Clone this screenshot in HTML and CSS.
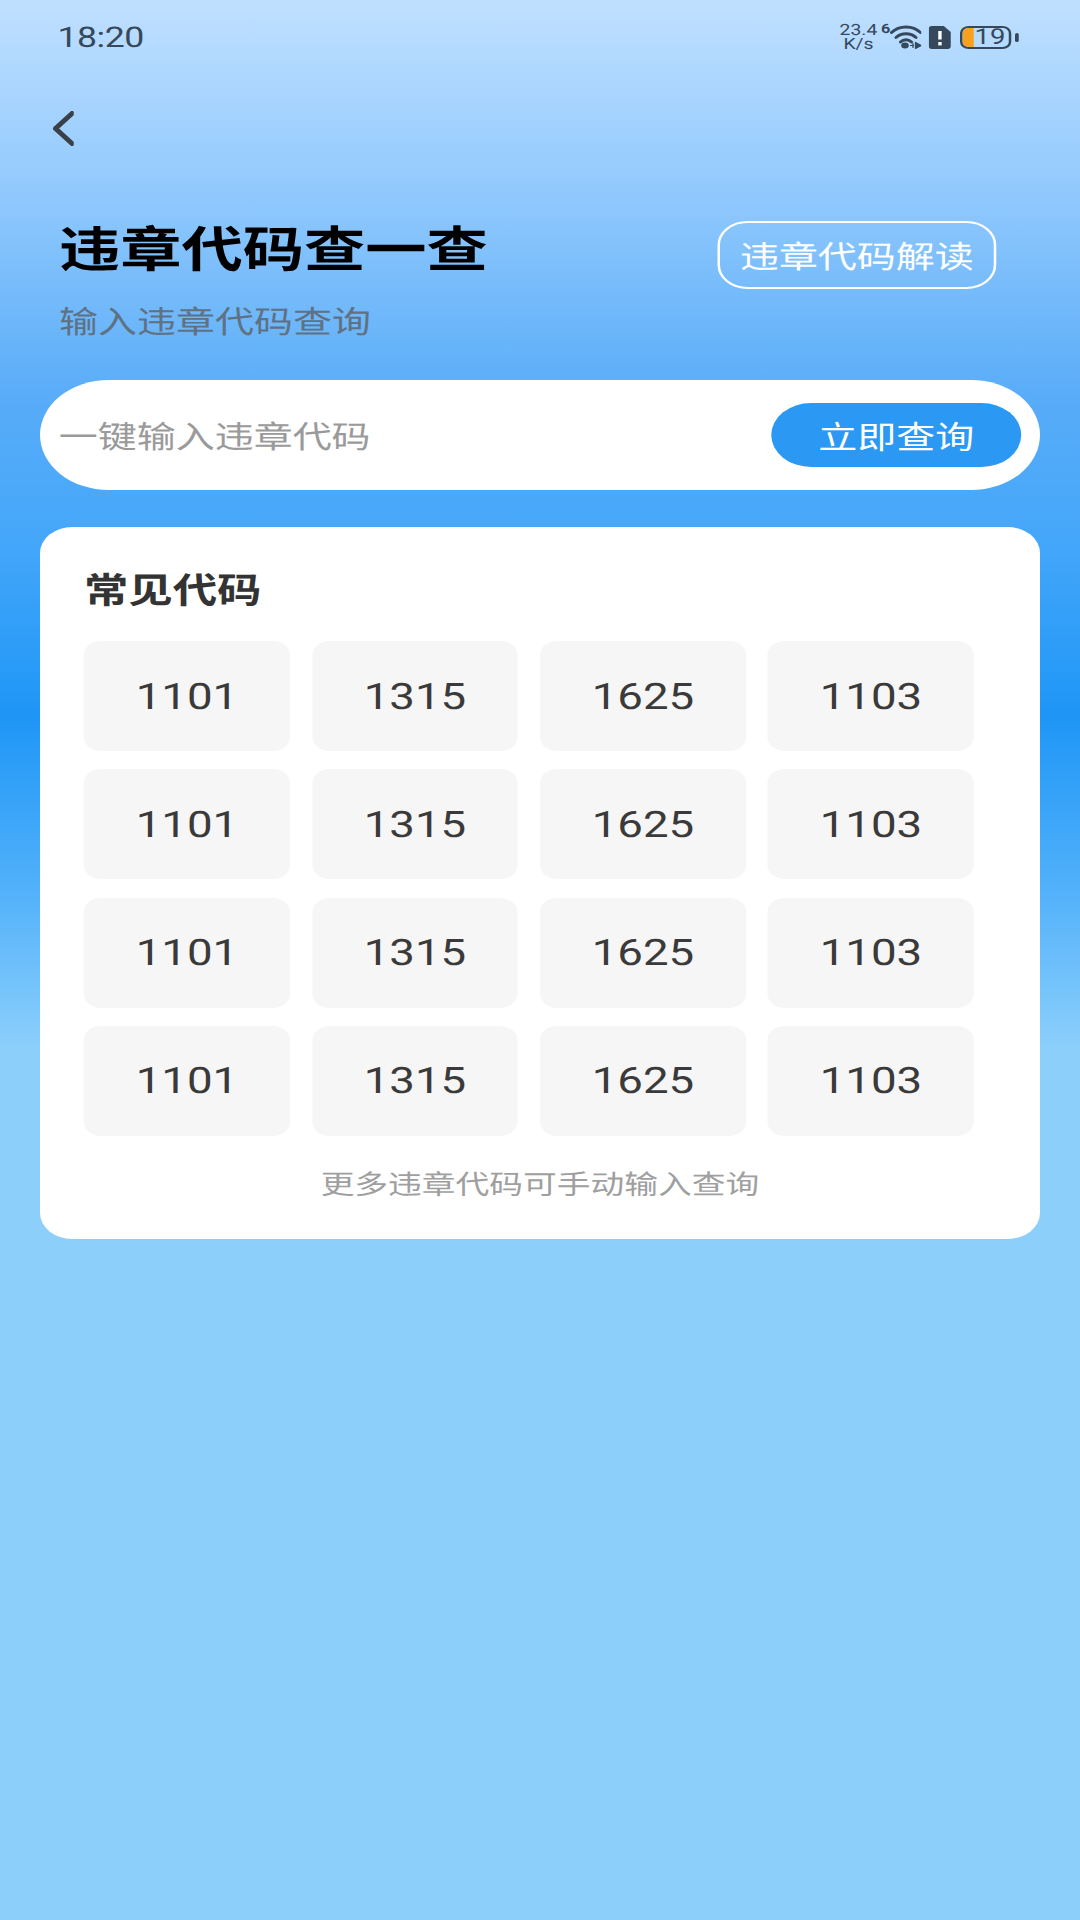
FILE: index.html
```html
<!DOCTYPE html>
<html lang="zh-CN">
<head>
<meta charset="utf-8">
<title>违章代码查一查</title>
<link rel="stylesheet" href="styles.css">
</head>
<body>
<div class="screen">
  <div class="status">
    <span class="time">18:20</span>
    <div class="status-right">
      <div class="speed"><span>23.4</span><span>K/s</span></div>
      <span class="wifi-six">6</span>
      <svg class="ic-wifi" viewBox="0 0 32 24" preserveAspectRatio="none">
        <path d="M1.5 7.5C9 0 23 0 30.5 7.5M6 12.5C11.5 7.5 20.5 7.5 26 12.5M10.5 17C13.5 14 18.5 14 21.5 17" fill="none" stroke="#36495c" stroke-width="3" stroke-linecap="round"/>
        <ellipse cx="15" cy="20.5" rx="3.8" ry="3" fill="#36495c"/>
        <path d="M20 20.5h4M25.5 17.5v6l5.5-3zM23 18v5" fill="#36495c" stroke="#36495c" stroke-width="1.2"/>
      </svg>
      <svg class="ic-sd" viewBox="0 0 22 23" preserveAspectRatio="none">
        <path d="M3 0H15L22 6V20Q22 23 19 23H3Q0 23 0 20V3Q0 0 3 0Z" fill="#36495c"/>
        <rect x="9.5" y="5" width="3.4" height="8.5" fill="#fff"/>
        <rect x="9.5" y="16" width="3.4" height="3.4" fill="#fff"/>
      </svg>
      <div class="battery"><span class="battery-fill"></span><span class="battery-num">19</span></div>
      <span class="battery-nub"></span>
    </div>
  </div>
  <div class="back">
    <svg class="ic-back" viewBox="0 0 22 35" preserveAspectRatio="none">
      <path d="M19.5 2.5 3 17.5 19.5 32.5" fill="none" stroke="#3a4047" stroke-width="5" stroke-linecap="round" stroke-linejoin="round"/>
    </svg>
  </div>
  <header class="head">
    <div class="head-text">
      <h1 class="title">违章代码查一查</h1>
      <p class="subtitle">输入违章代码查询</p>
    </div>
    <a class="explain">违章代码解读</a>
  </header>
  <div class="search">
    <span class="placeholder">一键输入违章代码</span>
    <button class="query">立即查询</button>
  </div>
  <section class="card">
    <h2 class="card-title">常见代码</h2>
    <div class="grid">
      <div class="tile">1101</div><div class="tile">1315</div><div class="tile">1625</div><div class="tile">1103</div>
      <div class="tile">1101</div><div class="tile">1315</div><div class="tile">1625</div><div class="tile">1103</div>
      <div class="tile">1101</div><div class="tile">1315</div><div class="tile">1625</div><div class="tile">1103</div>
      <div class="tile">1101</div><div class="tile">1315</div><div class="tile">1625</div><div class="tile">1103</div>
    </div>
    <p class="note">更多违章代码可手动输入查询</p>
  </section>
</div>
</body>
</html>
```
FILE: styles.css
```css
* { box-sizing: border-box; margin: 0; padding: 0; }
html, body { width: 1080px; height: 1920px; overflow: hidden; background: #8ccffb; }
body { font-family: "Noto Sans CJK SC", "Noto Sans", sans-serif; text-rendering: geometricPrecision; }

/* The reference is horizontally stretched by 1.25: lay out at 864 wide, then widen. */
.screen {
  width: 864px;
  height: 1920px;
  transform: scaleX(1.25);
  transform-origin: 0 0;
  background: linear-gradient(180deg, #c0e0ff 0, #8fc8fd 200px, #58acf8 400px, #45a7fa 540px, #1e96f6 715px, #52b1fa 890px, #8ccffb 1050px, #8ccffb 100%);
}

.status {
  height: 74px;
  padding: 0 40px 0 46px;
  display: flex;
  align-items: center;
  justify-content: space-between;
}
.time { font-family: Roboto, sans-serif; font-size: 28.5px; font-weight: 400; color: #36495c; letter-spacing: -.4px; }
.status-right { display: flex; align-items: center; padding-right: 9px; }
.speed { width: 30px; display: flex; flex-direction: column; align-items: center; font-family: Roboto, sans-serif; font-size: 15.5px; line-height: 14.5px; color: #36495c; }
.wifi-six { align-self: flex-start; margin-left: 3px; font-family: Roboto, sans-serif; font-size: 13px; line-height: 14px; font-weight: 700; color: #36495c; }
.ic-wifi { width: 25.6px; height: 24px; margin-left: -.5px; }
.ic-sd { width: 17.6px; height: 23px; margin-left: 5.6px; }
.battery { position: relative; width: 41.6px; height: 23px; margin-left: 7.2px; border: 2px solid #36495c; border-radius: 7px; display: flex; align-items: center; justify-content: center; overflow: hidden; }
.battery-fill { position: absolute; left: 0; top: 0; bottom: 0; width: 9.5px; background: #f9a11f; }
.battery-num { position: relative; font-family: Roboto, sans-serif; font-size: 22px; line-height: 19px; color: #36495c; padding-left: 7px; }
.battery-nub { width: 3.2px; height: 9px; margin-left: 2.5px; background: #36495c; border-radius: 2px; }

.back { height: 72px; padding-left: 41.6px; padding-top: 37px; }
.ic-back { display: block; width: 17.6px; height: 35px; }

.head { height: 234px; padding: 70.5px 67px 0 47.2px; display: flex; justify-content: space-between; align-items: flex-start; }
.title { font-size: 49px; line-height: 60px; font-weight: 700; color: #000; }
.subtitle { margin-top: 21px; font-size: 31.2px; line-height: 44px; color: #5f7284; }
.explain { width: 223px; height: 68px; margin-top: 4.5px; padding-bottom: 2px; border: 2px solid #fff; border-radius: 24px; display: flex; align-items: center; justify-content: center; font-size: 31.2px; color: #fff; }

.search { margin: 0 31.6px; height: 110px; background: #fff; border-radius: 55px; padding: 0 15.4px 2px 15.4px; display: flex; align-items: center; justify-content: space-between; }
.placeholder { font-size: 31.2px; color: #9a9a9a; }
.query { width: 200px; height: 64px; margin-top: 2px; padding-bottom: 2px; border: 0; border-radius: 32px; background: #2b98f3; color: #fff; font-family: inherit; font-size: 31.2px; }

.card { margin: 37px 31.6px 0; height: 712px; background: #fff; border-radius: 26px; padding: 38px 35.6px 0; }
.card-title { font-size: 35.5px; line-height: 48px; font-weight: 700; color: #333; }
.grid { margin-top: 28px; display: grid; grid-template-columns: repeat(4, 164.8px); grid-auto-rows: 110px; gap: 18.33px 17.6px; }
.tile { background: #f6f6f6; border-radius: 14px; display: flex; align-items: center; justify-content: center; font-family: Roboto, sans-serif; font-size: 36.5px; color: #3a3a3a; }
.note { margin-top: 28px; text-align: center; font-size: 27px; line-height: 38px; color: #9f9f9f; }
```
